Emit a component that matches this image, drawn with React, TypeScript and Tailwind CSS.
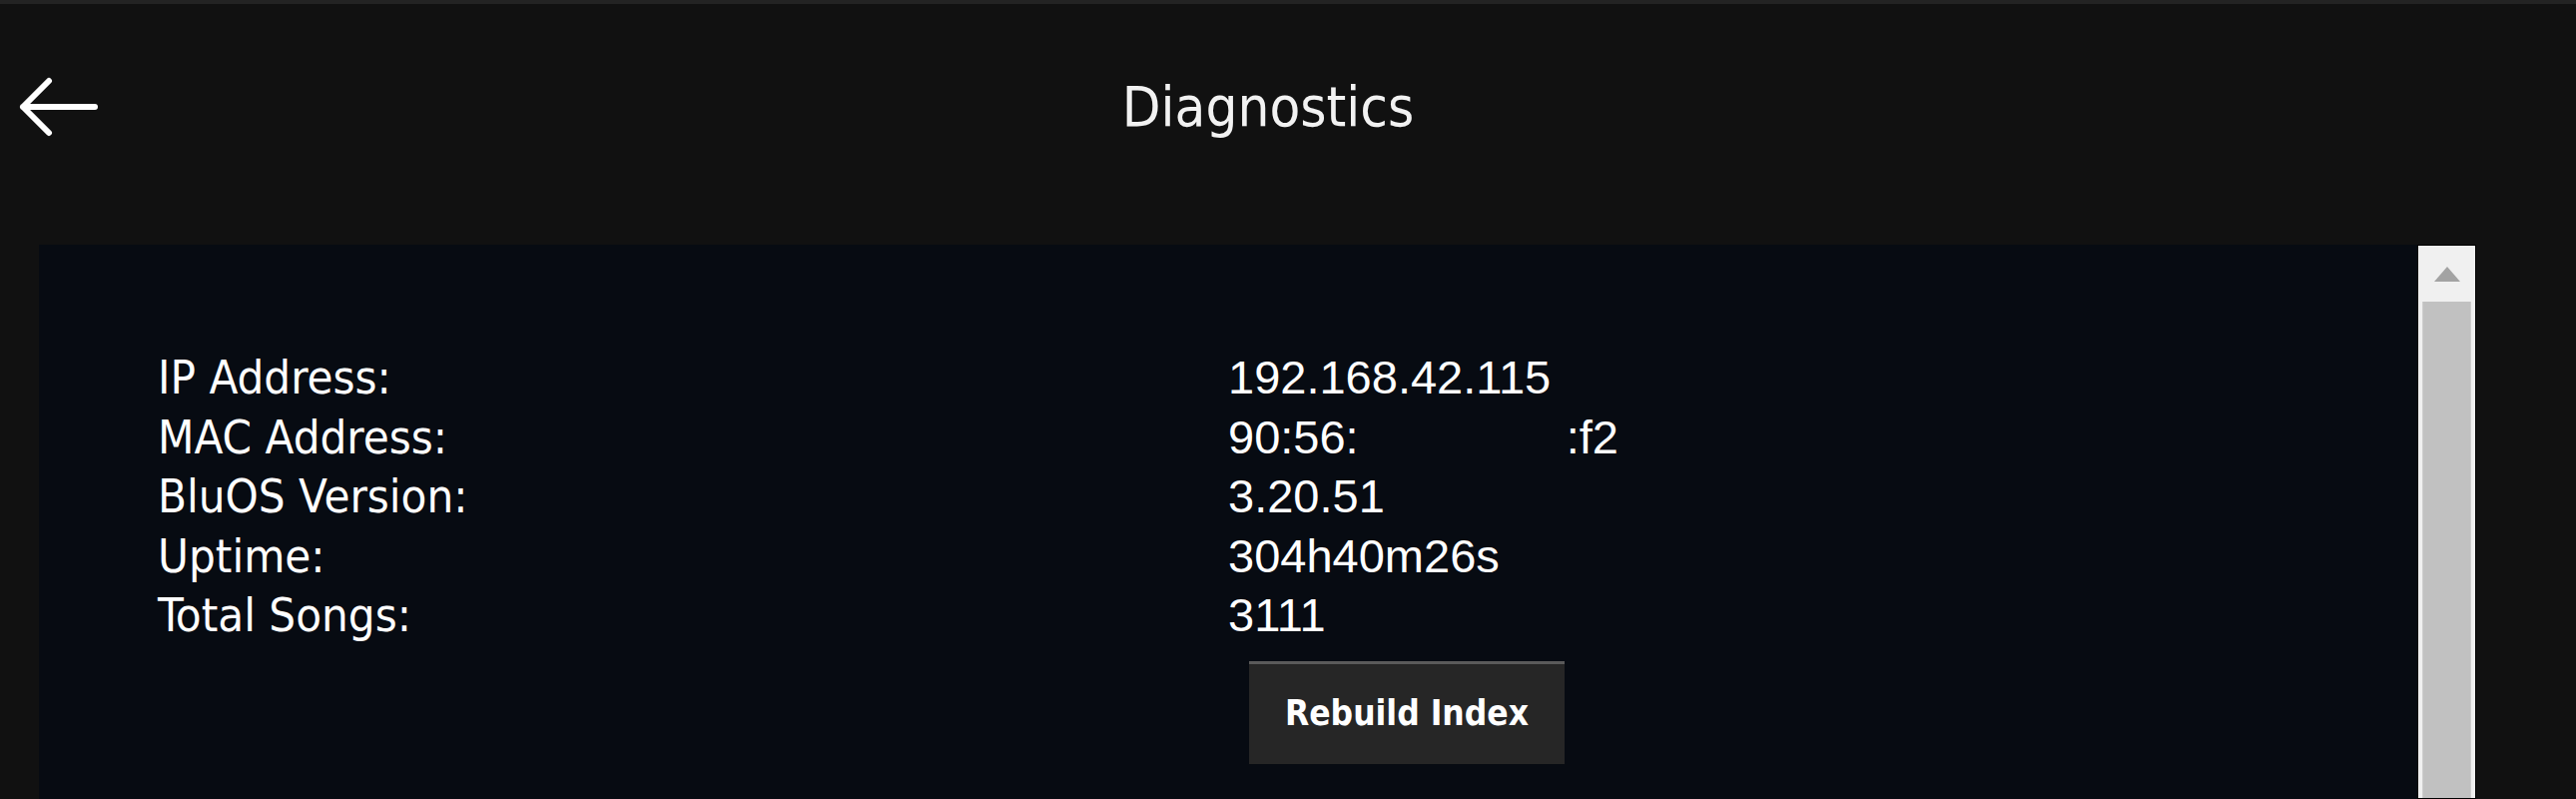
import { ReactNode } from "react";

const rows: { label: string; value: ReactNode }[] = [
  { label: "IP Address:", value: "192.168.42.115" },
  {
    label: "MAC Address:",
    value: (
      <>
        90:56:
        <span className="inline-block w-[208px]" />
        :f2
      </>
    ),
  },
  { label: "BluOS Version:", value: "3.20.51" },
  { label: "Uptime:", value: "304h40m26s" },
  { label: "Total Songs:", value: "3111" },
];

const BackArrow = () => (
  <svg width="80" height="62" viewBox="0 0 80 62" fill="none">
    <path
      d="M4 31H76M30 5L4 31L30 57"
      stroke="white"
      strokeWidth="6"
      strokeLinecap="round"
      strokeLinejoin="round"
    />
  </svg>
);

const FakeScrollbar = () => (
  <div className="w-[59px] flex flex-col border border-black bg-[#f0f0f0]">
    <div className="h-[56px] flex items-center justify-center">
      <div className="w-0 h-0 border-l-[13px] border-r-[13px] border-b-[15px] border-l-transparent border-r-transparent border-b-[#a3a3a3]" />
    </div>
    <div className="flex-1 mx-[4px] bg-[#c1c1c1] border-x border-[#cdcdcd]" />
  </div>
);

const App = () => {
  return (
    <div className="w-full h-[800px] bg-[#111111] overflow-hidden flex flex-col text-white font-['DejaVu_Sans_Condensed','Liberation_Sans',sans-serif]">
      <div className="h-[4px] bg-[#232323]" />

      {/* Header */}
      <div className="h-[206px] grid grid-cols-[140px_1fr_180px] items-center">
        <div className="pl-[19px] flex items-center">
          <BackArrow />
        </div>
        <h1 className="text-center text-[56px] leading-none font-normal text-[#f2f2f2]">
          Diagnostics
        </h1>
        <div />
      </div>

      {/* Content */}
      <div className="mt-[35px] ml-[39px] mr-[100px] flex flex-1 min-h-0">
        <div className="flex-1 bg-[#070b12] pl-[119px] pt-[103px]">
          <div className="grid grid-cols-[1072px_1fr]">
            {rows.map((row) => (
              <div key={row.label} className="contents">
                <div className="text-[47px] leading-[59.5px]">{row.label}</div>
                <div className="text-[47px] leading-[59.5px] font-['Liberation_Sans',sans-serif]">
                  {row.value}
                </div>
              </div>
            ))}
          </div>
          <button className="mt-[16px] ml-[1093px] w-[316px] h-[103px] bg-[#262626] border-t-[3px] border-[#5a5a5a] text-[35px] font-bold text-white">
            Rebuild Index
          </button>
        </div>
        <FakeScrollbar />
      </div>
    </div>
  );
};

export default App;
